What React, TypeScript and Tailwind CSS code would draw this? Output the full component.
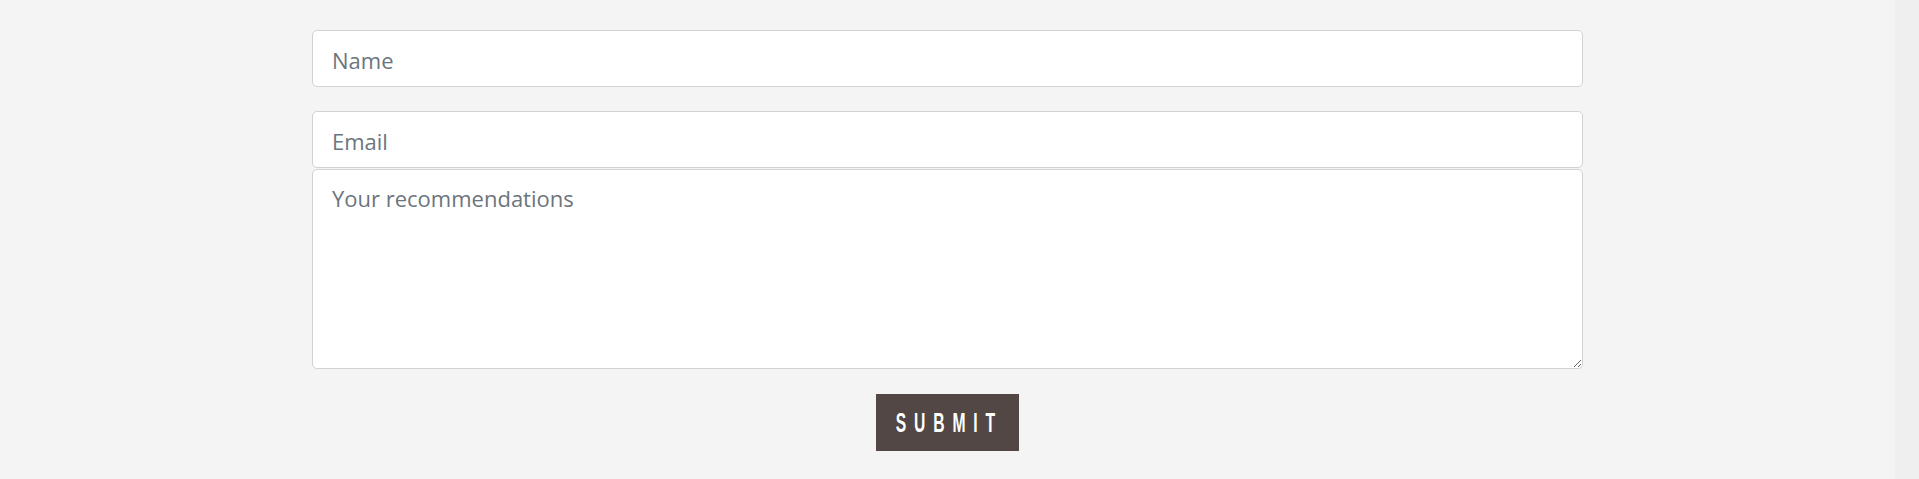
export default function App() {
  return (
    <div className="flex min-h-[479px] w-full bg-[#f4f4f4]">
      <div className="flex flex-1 flex-col items-center pt-[30px]">
        <form
          className="flex w-[1271px] flex-col"
          style={{ fontFamily: '"Open Sans", "Noto Sans", sans-serif' }}
          onSubmit={(e) => e.preventDefault()}
        >
          <input
            type="text"
            placeholder="Name"
            className="h-[57px] w-full rounded-[5px] border border-[#d2d2d2] bg-white px-[19px] pt-[3px] text-[22px] text-[#495057] outline-none placeholder:text-[#6c757d]"
          />
          <input
            type="email"
            placeholder="Email"
            className="mt-[24px] h-[57px] w-full rounded-[5px] border border-[#d2d2d2] bg-white px-[19px] pt-[2px] text-[22px] text-[#495057] outline-none placeholder:text-[#6c757d]"
          />
          <textarea
            placeholder="Your recommendations"
            className="mt-px h-[200px] w-full resize-y rounded-[5px] border border-[#d2d2d2] bg-white px-[19px] pt-[12px] text-[22px] leading-[1.5] text-[#495057] outline-none placeholder:text-[#6c757d]"
          />
          <div className="mt-[25px] flex justify-center">
            <button
              type="submit"
              className="flex h-[57px] w-[143px] items-center justify-center bg-[#524745] text-white"
            >
              <span
                className="inline-block scale-x-[0.56] pl-[6px] text-[28px] leading-none font-bold uppercase tracking-[14px]"
                style={{ fontFamily: '"Liberation Sans", Arial, sans-serif' }}
              >
                Submit
              </span>
            </button>
          </div>
        </form>
      </div>
      <div className="w-[24px] shrink-0 bg-[#efefef]" />
    </div>
  );
}
